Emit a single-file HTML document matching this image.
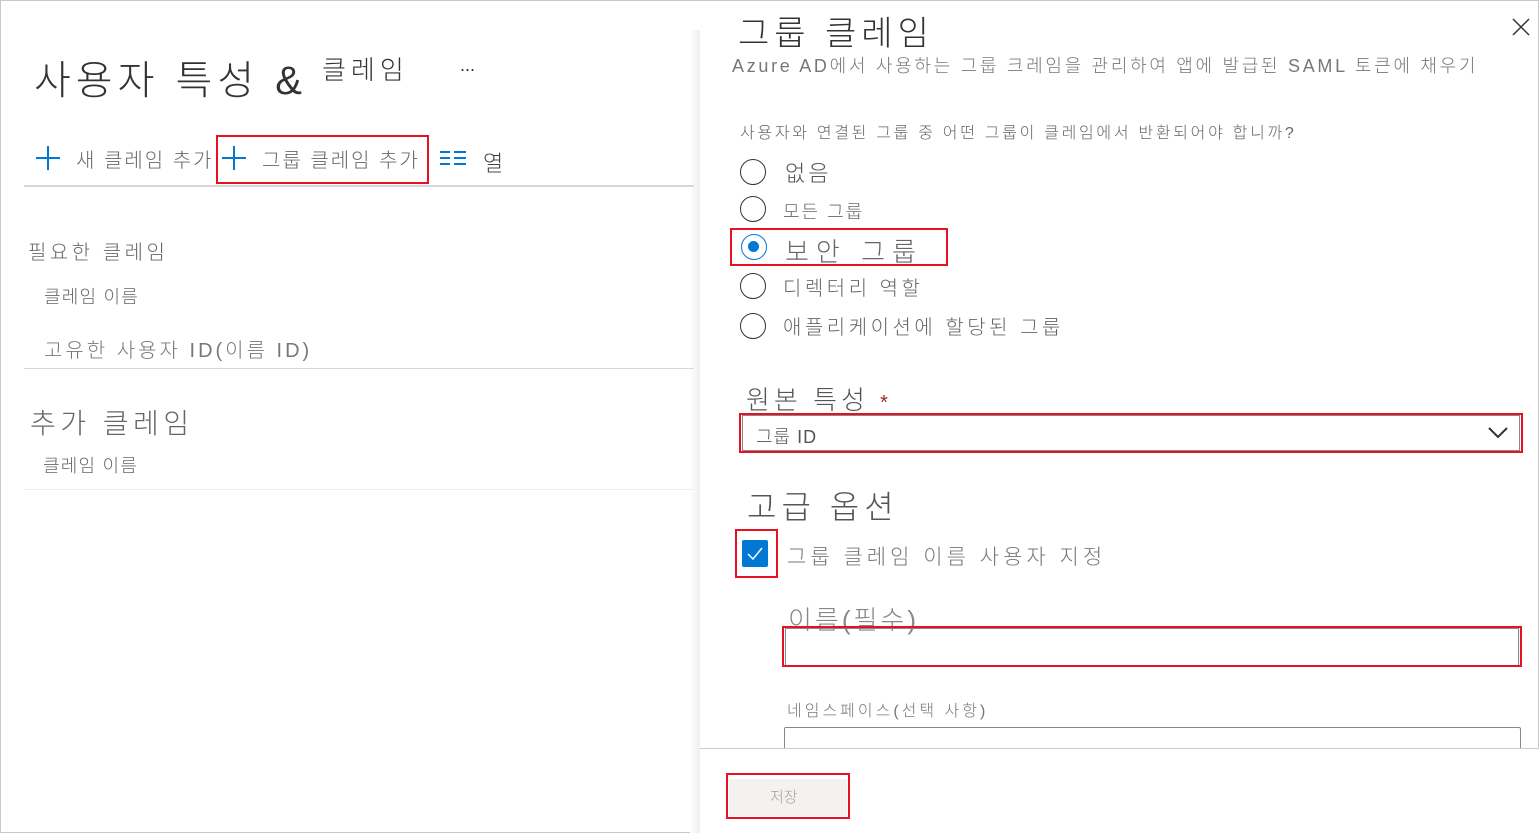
<!DOCTYPE html>
<html><head><meta charset="utf-8"><style>
*{margin:0;padding:0;box-sizing:border-box}
body{width:1539px;height:833px;position:relative;background:#fff;font-family:"Liberation Sans","Noto Sans CJK KR",sans-serif;color:#323130;overflow:hidden}
.a{position:absolute;white-space:nowrap;font-weight:300}
.red{position:absolute;border:2px solid #e81123}
.line{position:absolute;height:1px;background:#d8d8d8}
.radio{position:absolute;width:26px;height:26px;border:1.5px solid #333;border-radius:50%}
</style></head><body>
<div style="position:absolute;left:0;top:0;width:1539px;height:833px;border:1px solid #c8c8c8"></div>
<div style="position:absolute;left:690px;top:30px;width:10px;height:803px;background:linear-gradient(90deg,#fff,#eee)"></div>
<div class="a" style="left:34px;top:48px;font-size:40px;color:#333;letter-spacing:5px">사용자 특성 &amp;</div>
<div class="a" style="left:322px;top:50px;font-size:26px;color:#333;letter-spacing:5px">클레임</div>
<div class="a" style="left:460px;top:55px;font-size:18px;color:#333">...</div>
<svg class="a" style="left:36px;top:146px" width="24" height="24"><path d="M12 0V24M0 12H24" stroke="#0078d4" stroke-width="2"/></svg>
<div class="a" style="left:76px;top:144px;font-size:20px;color:#666;letter-spacing:2px">새 클레임 추가</div>
<svg class="a" style="left:222px;top:146px" width="24" height="24"><path d="M12 0V24M0 12H24" stroke="#0078d4" stroke-width="2"/></svg>
<div class="a" style="left:262px;top:144px;font-size:20px;color:#666;letter-spacing:2px">그룹 클레임 추가</div>
<div class="red" style="left:216px;top:135px;width:213px;height:49px"></div>
<svg class="a" style="left:440px;top:150px" width="26" height="16"><path d="M0 2H10M14 2H26M0 8H10M14 8H26M0 14H10M14 14H26" stroke="#0078d4" stroke-width="2"/></svg>
<div class="a" style="left:483px;top:146px;font-size:22px;color:#444">열</div>
<div class="line" style="left:24px;top:185px;width:670px;height:2px"></div>
<div class="a" style="left:28px;top:236px;font-size:20px;color:#666;letter-spacing:3.5px">필요한 클레임</div>
<div class="a" style="left:44px;top:283px;font-size:18px;color:#666;letter-spacing:1.2px">클레임 이름</div>
<div class="a" style="left:44px;top:334px;font-size:20px;color:#777;letter-spacing:3px">고유한 사용자 ID(이름 ID)</div>
<div class="line" style="left:24px;top:368px;width:670px"></div>
<div class="a" style="left:30px;top:402px;font-size:28px;color:#666;letter-spacing:4.5px">추가 클레임</div>
<div class="a" style="left:43px;top:452px;font-size:18px;color:#666;letter-spacing:1.2px">클레임 이름</div>
<div class="line" style="left:24px;top:489px;width:670px;background:#eee"></div>

<div class="a" style="left:738px;top:6px;font-size:34px;color:#333;letter-spacing:5px">그룹 클레임</div>
<svg class="a" style="left:1512px;top:18px" width="18" height="18"><path d="M1 1L17 17M17 1L1 17" stroke="#333" stroke-width="1.5"/></svg>
<div class="a" style="left:732px;top:52px;font-size:18px;color:#777;letter-spacing:2.7px">Azure AD에서 사용하는 그룹 크레임을 관리하여 앱에 발급된 SAML 토큰에 채우기</div>
<div class="a" style="left:740px;top:119px;font-size:16px;color:#666;letter-spacing:2.7px">사용자와 연결된 그룹 중 어떤 그룹이 클레임에서 반환되어야 합니까?</div>
<div class="radio" style="left:740px;top:159px"></div><div class="a" style="left:785px;top:156px;font-size:22px;color:#555;letter-spacing:3px">없음</div>
<div class="radio" style="left:740px;top:196px"></div><div class="a" style="left:783px;top:198px;font-size:18px;color:#666;letter-spacing:2px">모든 그룹</div>
<div class="radio" style="left:741px;top:234px;border-color:#0078d4"><div style="position:absolute;left:6px;top:6px;width:11px;height:11px;border-radius:50%;background:#0078d4"></div></div>
<div class="a" style="left:785px;top:232px;font-size:26px;color:#666;letter-spacing:7px">보안 그룹</div>
<div class="red" style="left:730px;top:228px;width:218px;height:38px"></div>
<div class="radio" style="left:740px;top:273px"></div><div class="a" style="left:783px;top:272px;font-size:20px;color:#666;letter-spacing:3.5px">디렉터리 역할</div>
<div class="radio" style="left:740px;top:313px"></div><div class="a" style="left:783px;top:311px;font-size:20px;color:#666;letter-spacing:3.5px">애플리케이션에 할당된 그룹</div>
<div class="a" style="left:746px;top:380px;font-size:26px;color:#555;letter-spacing:4px">원본 특성 <span style="color:#a4262c;font-size:20px">*</span></div>
<div style="position:absolute;left:742px;top:415px;width:778px;height:36px;border:1px solid #8a8886"></div>
<div class="red" style="left:739px;top:413px;width:784px;height:40px"></div>
<div class="a" style="left:756px;top:423px;font-size:18px;color:#555;letter-spacing:1px">그룹 ID</div>
<svg class="a" style="left:1488px;top:426px" width="20" height="14"><path d="M1 2 L10 11 L19 2" stroke="#333" stroke-width="2" fill="none"/></svg>
<div class="a" style="left:747px;top:482px;font-size:32px;color:#555;letter-spacing:5px">고급 옵션</div>
<div style="position:absolute;left:742px;top:540px;width:26px;height:27px;background:#0078d4;border-radius:2px"></div>
<svg class="a" style="left:745px;top:544px" width="20" height="20"><path d="M3 10 L8 15 L17 4" stroke="#fff" stroke-width="1.5" fill="none"/></svg>
<div class="red" style="left:735px;top:529px;width:43px;height:49px"></div>
<div class="a" style="left:787px;top:541px;font-size:21px;color:#777;letter-spacing:4px">그룹 클레임 이름 사용자 지정</div>
<div class="a" style="left:788px;top:600px;font-size:26px;color:#888;letter-spacing:3px">이름(필수)</div>
<div style="position:absolute;left:785px;top:628px;width:734px;height:38px;border:1px solid #8a8886"></div>
<div class="red" style="left:782px;top:626px;width:740px;height:41px"></div>
<div class="a" style="left:787px;top:697px;font-size:16px;color:#777;letter-spacing:3px">네임스페이스(선택 사항)</div>
<div style="position:absolute;left:784px;top:727px;width:737px;height:30px;border:1px solid #8a8886;border-radius:2px"></div>
<div style="position:absolute;left:700px;top:748px;width:839px;height:85px;background:#fff;border-top:1px solid #ccc"></div>
<div style="position:absolute;left:729px;top:779px;width:118px;height:37px;background:#f3f2f1"></div>
<div class="a" style="left:770px;top:786px;font-size:15px;color:#a19f9d">저장</div>
<div class="red" style="left:726px;top:773px;width:124px;height:46px"></div>
</body></html>
